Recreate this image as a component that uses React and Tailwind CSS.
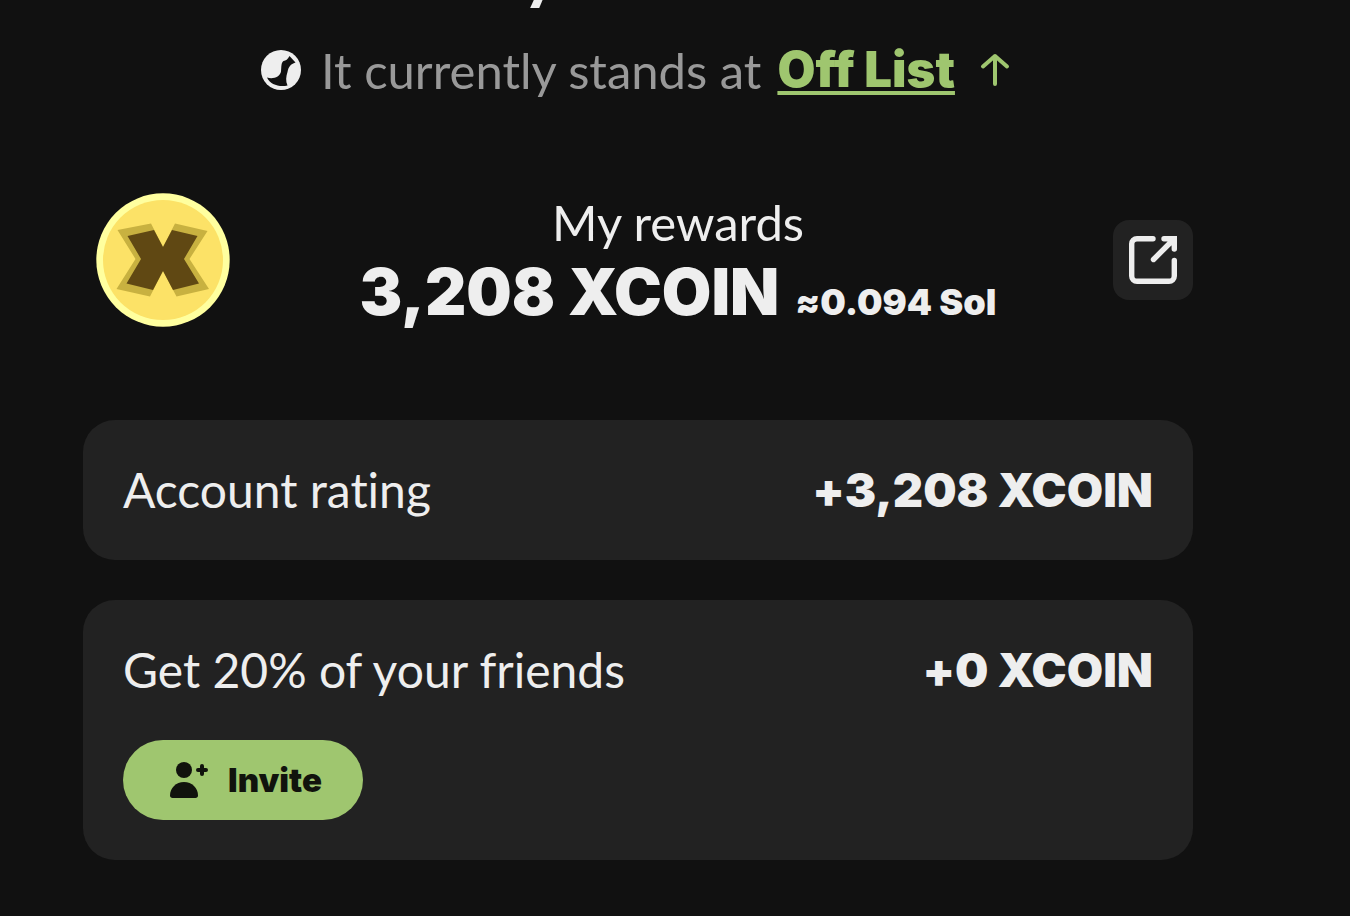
const rewards = [
  { label: "Account rating", amount: "+3,208 XCOIN" },
  { label: "Get 20% of your friends", amount: "+0 XCOIN", invite: true },
];

function ListIcon() {
  return (
    <svg viewBox="0 0 40 40" className="size-10 shrink-0" aria-hidden="true">
      <circle cx="20" cy="20" r="20" fill="#eeeeee" />
      <path
        d="M28.500 6 34.500 12.500C29.500 14 27.500 17 26.500 22 25 26.500 24.500 31 26.500 35.500 18.500 37.500 9 34.500 6 27.500 12 29.500 19 27 20 21.500 20.500 17 20 12.500 22.500 11 25 10.500 26.500 9.500 28.500 6Z"
        fill="#111111"
      />
    </svg>
  );
}

function ArrowUpIcon() {
  return (
    <svg viewBox="0 0 40 40" className="size-10 shrink-0" fill="none" aria-hidden="true">
      <path
        d="M20 34V6M8 16.500 20 6l12 10.500"
        stroke="#9fc66f"
        strokeWidth="4"
        strokeLinecap="round"
        strokeLinejoin="round"
      />
    </svg>
  );
}

function CoinIcon() {
  return (
    <svg viewBox="0 0 160 160" className="size-40 shrink-0" aria-hidden="true">
      <circle cx="80" cy="80" r="66.700" fill="#ffff9f" />
      <circle cx="80" cy="80" r="60" fill="#fce267" />
      <path
        d="M34.500 50 68 43.500 80 67 92 43.500 124.500 51 106.500 79 126 109 93.500 116.500 80 91 67 116.500 33.500 109 52.500 79Z"
        fill="#c8b140"
      />
      <path
        d="M44.500 56 71 50 80 67 89 50 114.500 56 101 79 116 103.500 90 110 80 91 70 110 43.500 103.500 58 79Z"
        fill="#604813"
      />
    </svg>
  );
}

function ShareIcon() {
  return (
    <svg viewBox="0 0 80 80" className="size-20" fill="none" aria-hidden="true">
      <g stroke="#eeeeee" strokeWidth="5.400" strokeLinecap="round">
        <path d="M40 18.700H24a5.300 5.300 0 0 0-5.300 5.300v32a5.300 5.300 0 0 0 5.300 5.300h32a5.300 5.300 0 0 0 5.300-5.300V40.500" />
        <path d="M40.500 39.500 60 20M51 18.700h10.300V29" />
      </g>
    </svg>
  );
}

function InviteIcon() {
  return (
    <svg viewBox="0 0 40 40" className="size-10 shrink-0" fill="#11130d" aria-hidden="true">
      <circle cx="16" cy="10" r="8" />
      <path d="M16 22c8 0 14 6 14 13.500 0 1.500-1 2.500-2.500 2.500h-23C3 38 2 37 2 35.500 2 28 8 22 16 22Z" />
      <path d="M34 6v8M30 10h8" stroke="#11130d" strokeWidth="4" strokeLinecap="round" />
    </svg>
  );
}

function RewardCard({ label, amount, invite }) {
  return (
    <li className="rounded-[32px] bg-[#222222] p-10">
      <div className="flex items-center justify-between text-[48px] leading-[60px]">
        <span>{label}</span>
        <span className="font-['Inter',sans-serif] text-[47px] font-black">{amount}</span>
      </div>
      {invite && (
        <button
          type="button"
          className="mt-10 flex h-20 w-60 items-center justify-center gap-5 rounded-full bg-[#9fc66f] pl-1 font-['Inter',sans-serif] text-[33px] leading-[40px] font-black text-[#11130d]"
        >
          <InviteIcon />
          Invite
        </button>
      )}
    </li>
  );
}

export default function App() {
  return (
    <main className="min-h-screen bg-[#111111] pr-[157px] pl-[83px] font-['Lato',sans-serif] text-[#eeeeee] [font-variant-ligatures:none]">
      {/* Tail of the headline that is scrolled off the top */}
      <h1 className="flex h-2 items-end justify-center overflow-hidden pr-[200px] text-[68px] leading-[64px] font-black">
        y
      </h1>

      <div className="mt-8 flex items-center justify-center gap-5 text-[49px] leading-[60px] text-[#999999]">
        <ListIcon />
        <p className="flex items-center gap-4">
          It currently stands at
          <a
            href="#list"
            className="font-['Inter',sans-serif] text-[49px] font-black text-[#9fc66f] underline decoration-4 underline-offset-4"
          >
            Off List
          </a>
        </p>
        <ArrowUpIcon />
      </div>

      <section className="mt-20 flex items-center">
        <CoinIcon />
        <div className="flex-1 pt-1 text-center">
          <h2 className="text-[49px] leading-[60px]">My rewards</h2>
          <p className="flex items-baseline justify-center gap-4 font-['Inter',sans-serif] text-[64px] leading-[80px] font-black">
            3,208 XCOIN <span className="text-[36px] leading-[40px]">≈0.094 Sol</span>
          </p>
        </div>
        <button type="button" aria-label="Share rewards" className="rounded-2xl bg-[#222222]">
          <ShareIcon />
        </button>
      </section>

      <ul className="mt-20 flex flex-col gap-10">
        {rewards.map((reward) => (
          <RewardCard key={reward.label} {...reward} />
        ))}
      </ul>
    </main>
  );
}
